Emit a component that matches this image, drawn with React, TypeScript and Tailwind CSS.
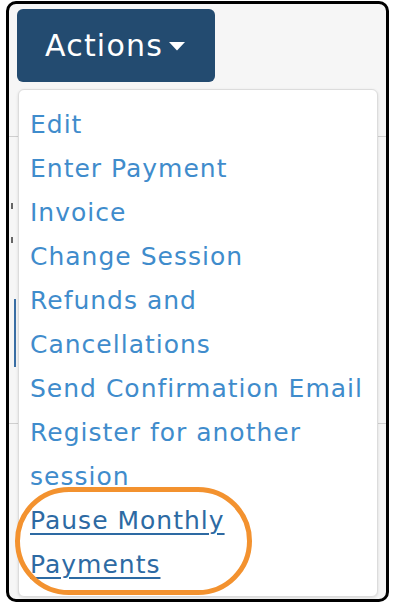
import React from 'react';

const items = [
  'Edit',
  'Enter Payment',
  'Invoice',
  'Change Session',
  'Refunds and Cancellations',
  'Send Confirmation Email',
  'Register for another session',
];

const App: React.FC = () => {
  return (
    <div className="w-[393px] h-[606px] bg-white pt-[1px] pl-[6px]" style={{ fontFamily: '"DejaVu Sans", sans-serif' }}>
      <div className="relative w-[383px] h-[601px] border-[3px] border-black rounded-[10px] bg-[#f6f6f6] overflow-hidden">
        {/* Page behind the menu */}
        <div className="pl-[8px] pt-[5px]">
          <button className="flex items-center w-[198px] h-[73px] pl-[28px] bg-[#234b70] rounded-[6px] text-white text-[30px] tracking-[1.2px]">
            <span>Actions</span>
            <svg width="16" height="9" viewBox="0 0 16 9" className="ml-[6px] mt-[2px]">
              <path d="M0 0 H16 L8 8.5 Z" fill="white" />
            </svg>
          </button>
        </div>
        <div className="mt-[54px] border-t border-[#cfcfcf]" />
        <div className="ml-[2px] mt-[66px] h-[6px] w-[2px] bg-[#666]" />
        <div className="ml-[2px] mt-[28px] h-[6px] w-[2px] bg-[#666]" />
        <div className="ml-[5px] mt-[56px] h-[68px] w-[2px] bg-[#3a6fa5]" />
        <div className="mt-[56px] border-t border-[#cfcfcf]" />

        {/* Dropdown */}
        <div className="absolute left-[9px] top-[85px] w-[360px] h-[508px] bg-white border border-[#dcdcdc] rounded-[6px] shadow-[0_1px_3px_rgba(0,0,0,0.12)] pt-[13px] pl-[11px] pr-[4px]">
          {items.map((t) => (
            <div key={t} className="text-[25px] leading-[44px] text-[#3f8ccc] tracking-[1px]">
              {t}
            </div>
          ))}
          <div className="text-[25px] leading-[44px] text-[#2d6aa3] tracking-[1px] underline underline-offset-[4px] decoration-[1.5px] w-[220px]">
            Pause Monthly Payments
          </div>
        </div>

        {/* Highlight ring */}
        <div className="absolute left-[6px] top-[483px] w-[237px] h-[108px] border-[5px] border-[#f3922f] rounded-full" />
      </div>
    </div>
  );
};

export default App;
